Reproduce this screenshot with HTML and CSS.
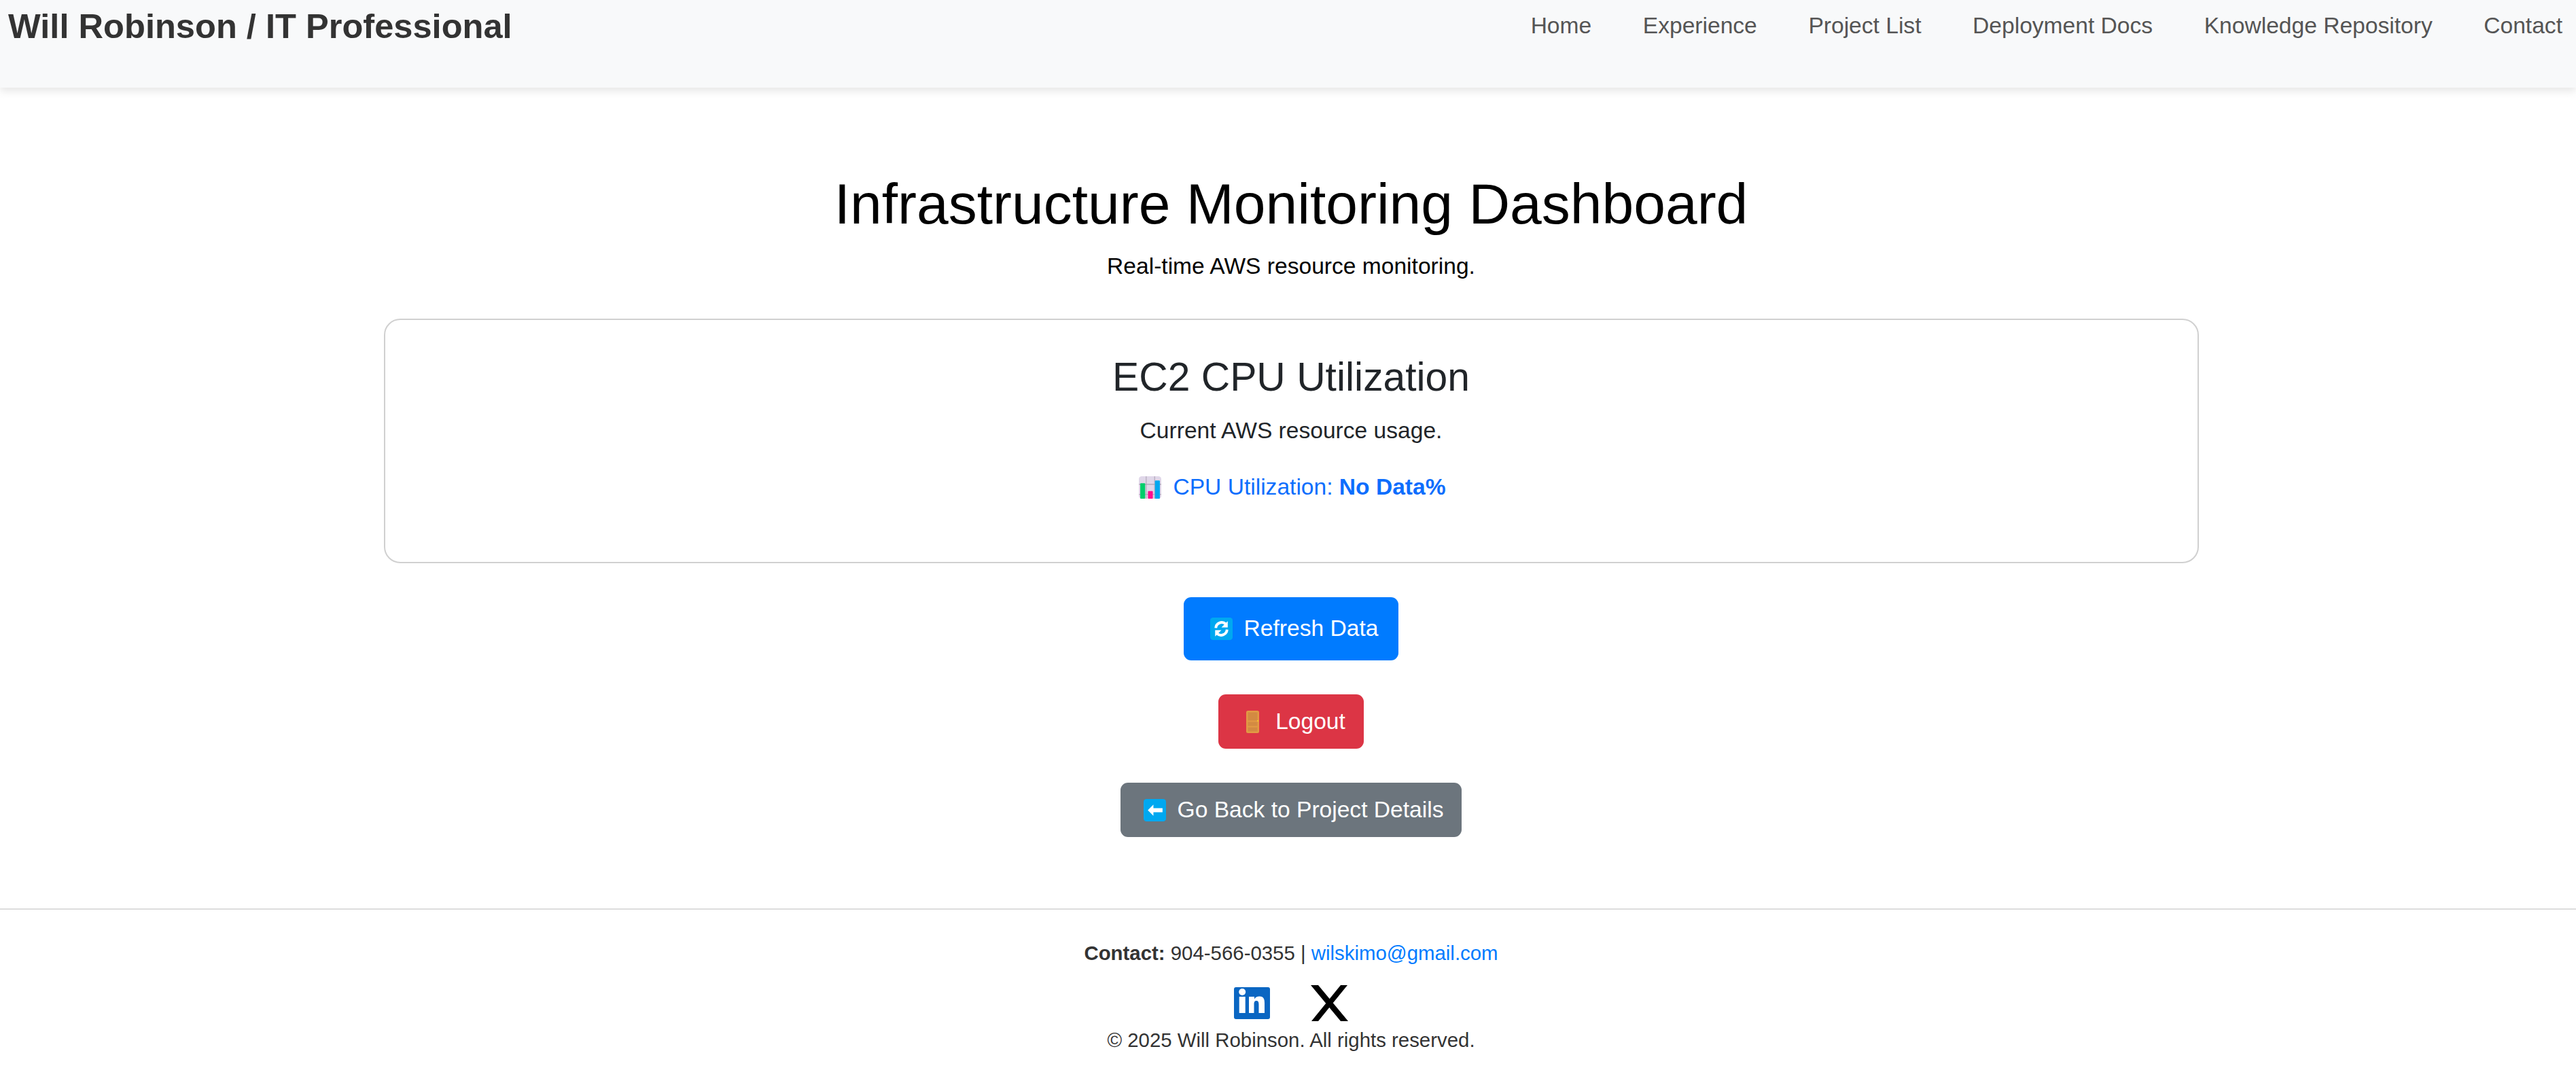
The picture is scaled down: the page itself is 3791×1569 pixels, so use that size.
FILE: index.html
```html
<!DOCTYPE html>
<html lang="en">
<head>
<meta charset="utf-8">
<title>Infrastructure Monitoring Dashboard</title>
<link rel="stylesheet" href="styles.css">
</head>
<body>
<header class="site-header">
  <a class="brand" href="#">Will Robinson / IT Professional</a>
  <nav class="nav">
    <a href="#">Home</a>
    <a href="#">Experience</a>
    <a href="#">Project List</a>
    <a href="#">Deployment Docs</a>
    <a href="#">Knowledge Repository</a>
    <a href="#">Contact</a>
  </nav>
</header>
<main class="main">
  <h1 class="title">Infrastructure Monitoring Dashboard</h1>
  <p class="lead">Real-time AWS resource monitoring.</p>
  <section class="card">
    <h2 class="card-title">EC2 CPU Utilization</h2>
    <p class="card-text">Current AWS resource usage.</p>
    <p class="metric">
      <svg class="emoji" viewBox="0 0 32 32"><rect width="32" height="32" rx="4" fill="#e0d7e9"/><path d="M10.500 0v32M22.500 0v32M0 11.500h32M0 26h32" stroke="#aaa3b3" stroke-width="1"/><rect x="2" y="10" width="7" height="22" rx="1" fill="#00ce6b"/><rect x="13" y="21" width="7" height="11" rx="1" fill="#ff0f8f"/><rect x="23" y="6" width="7" height="26" rx="1" fill="#00a8f0"/></svg>
      <span>CPU Utilization: <strong>No Data%</strong></span>
    </p>
  </section>
  <div class="actions">
    <a class="btn btn-blue" href="#"><svg class="emoji" viewBox="0 0 32 32"><rect width="32" height="32" rx="4" fill="#00a8f0"/><path d="M8 15a8.500 8.500 0 0 1 14-6" fill="none" stroke="#fff" stroke-width="3.800"/><path d="M25 5v9h-9z" fill="#fff"/><path d="M24 17a8.500 8.500 0 0 1-14 6" fill="none" stroke="#fff" stroke-width="3.800"/><path d="M7 27v-9h9z" fill="#fff"/></svg><span>Refresh Data</span></a>
    <a class="btn btn-red" href="#"><svg class="emoji emoji-door" viewBox="0 0 19 33"><rect width="19" height="33" rx="2.500" fill="#e29a44"/><rect x="2.500" y="2.500" width="14" height="12" fill="#d38a42"/><rect x="2.500" y="16.500" width="14" height="6" fill="#d38a42"/><rect x="2.500" y="24.500" width="14" height="6" fill="#d38a42"/><rect x="16" y="14" width="2" height="2" fill="#f7c12e"/></svg><span>Logout</span></a>
    <a class="btn btn-gray" href="#"><svg class="emoji" viewBox="0 0 32 32"><rect width="32" height="32" rx="4" fill="#00a8f0"/><path d="M6 16l8-8v5h13v6H14v5z" fill="#fff"/></svg><span>Go Back to Project Details</span></a>
  </div>
</main>
<footer class="footer">
  <p class="contact"><strong>Contact:</strong> 904-566-0355 | <a href="#">wilskimo@gmail.com</a></p>
  <div class="social">
    <a href="#" aria-label="LinkedIn"><svg class="icon-in" viewBox="0 0 53 47"><rect width="53" height="47" rx="3" fill="#0a66c2"/><ellipse cx="12.200" cy="7" rx="5" ry="5" fill="#fff"/><path d="M7.700 14h9v24h-9zM22 14h8v3.500c1.400-2.500 4-4 7.500-4 6.500 0 7.500 4.500 7.500 10V38h-8.500V25.500c0-3-.5-5.500-3.500-5.500-3.200 0-3.500 2.600-3.500 5.500V38H22z" fill="#fff"/></svg></a>
    <a href="#" aria-label="X"><svg class="icon-x" viewBox="0 0 57 53"><path d="M1 0h11l44 53H45zM45 0h10L12 53H2z" fill="#000"/></svg></a>
  </div>
  <p class="copy">© 2025 Will Robinson. All rights reserved.</p>
</footer>
</body>
</html>
```

FILE: styles.css
```css
* { box-sizing: border-box; }
html, body { margin: 0; padding: 0; }
body {
  font-family: "Liberation Sans", Arial, sans-serif;
  background: #fff;
  color: #212529;
  font-size: 33.6px;
  line-height: 1.5;
}
a { text-decoration: none; }

.site-header {
  height: 129px;
  background: #f8f9fa;
  box-shadow: 0 5px 12px rgba(0, 0, 0, 0.1);
  display: flex;
  justify-content: space-between;
  align-items: flex-start;
  padding: 0 20px 0 12px;
}
.brand {
  font-size: 50.6px;
  font-weight: 700;
  line-height: 1;
  color: #333;
  padding-top: 14px;
}
.nav {
  display: flex;
  gap: 75.6px;
  padding-top: 18px;
}
.nav a {
  color: #555;
  font-size: 33.6px;
  line-height: 40px;
}

.main {
  display: flex;
  flex-direction: column;
  align-items: center;
  padding: 117px 0 0 9px;
}
.title {
  margin: 0;
  font-size: 84px;
  font-weight: 400;
  line-height: 108px;
  color: #000;
}
.lead {
  margin: 13px 0 0;
  line-height: 50px;
  color: #000;
}
.card {
  width: 2671px;
  height: 360px;
  margin-top: 52px;
  border: 2px solid #d0d0d0;
  border-radius: 24px;
  display: flex;
  flex-direction: column;
  align-items: center;
  padding-top: 49px;
}
.card-title {
  margin: 0;
  font-size: 58.8px;
  font-weight: 400;
  line-height: 70px;
  color: #212529;
}
.card-text {
  margin: 19px 0 0;
  line-height: 50px;
}
.metric {
  margin: 33px 0 0;
  padding-left: 4px;
  display: flex;
  align-items: center;
  gap: 17px;
  color: #0d6efd;
  line-height: 50px;
}
.emoji { width: 33px; height: 33px; flex: none; display: block; }
.emoji-door { width: 19px; }

.actions {
  display: flex;
  flex-direction: column;
  align-items: center;
  margin-top: 50px;
}
.btn {
  display: flex;
  align-items: center;
  color: #fff;
  border-radius: 11px;
}
.btn-blue { background: #007bff; height: 93px; padding: 0 30px 0 39px; gap: 17px; }
.btn-red { background: #dc3545; height: 80px; padding: 0 27px 0 41px; margin-top: 50px; gap: 24px; }
.btn-gray { background: #6c757d; height: 80px; padding: 0 27px 0 34px; margin-top: 50px; gap: 17px; }

.footer {
  margin-top: 105px;
  border-top: 2px solid #ddd;
  display: flex;
  flex-direction: column;
  align-items: center;
  padding: 44px 0 0 9px;
  color: #333;
  font-size: 29.4px;
}
.contact { margin: 0; line-height: 40px; }
.contact a { color: #007bff; }
.social {
  display: flex;
  align-items: center;
  gap: 59px;
  margin-top: 27px;
}
.social a { display: block; }
.social svg { display: block; }
.icon-in { width: 53px; height: 47px; }
.icon-x { width: 57px; height: 53px; }
.copy { margin: 8px 0 0; line-height: 40px; }
```
